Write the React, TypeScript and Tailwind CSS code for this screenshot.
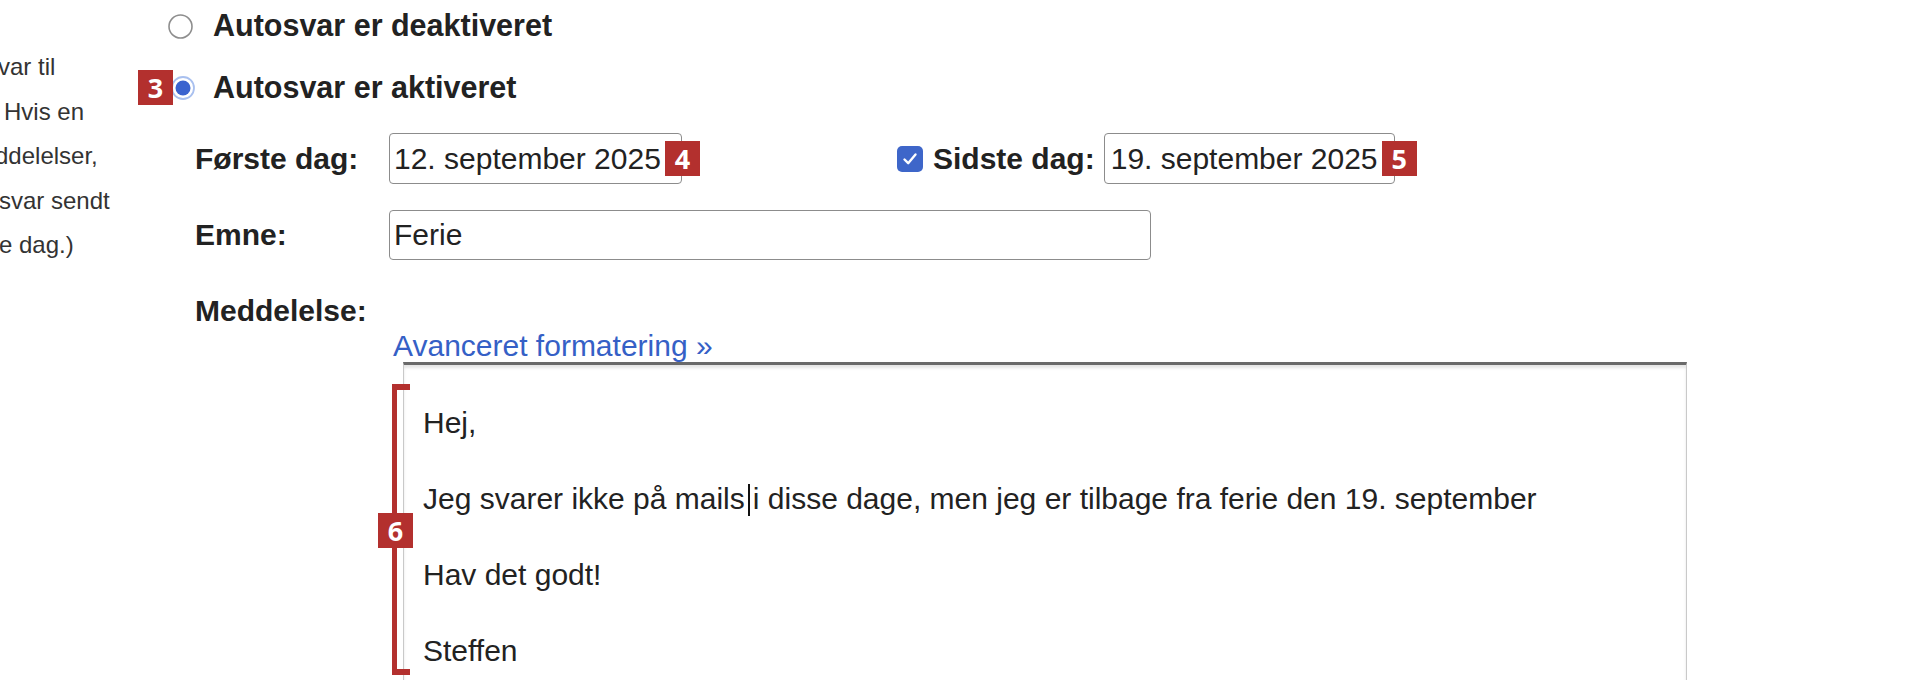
import React from "react";

function Badge({ n, className = "" }: { n: string; className?: string }) {
  return (
    <div
      className={
        "flex h-[35px] w-[35px] items-center justify-center bg-[#b3302e] font-['Open_Sans',sans-serif] text-[27px] font-bold leading-none text-white " +
        className
      }
    >
      {n}
    </div>
  );
}

function RadioOff() {
  return (
    <svg width="25" height="25" viewBox="0 0 25 25" className="shrink-0">
      <circle cx="12.5" cy="12.5" r="11.5" fill="#fff" stroke="#8e8e8e" strokeWidth="1.6" />
    </svg>
  );
}

function RadioOn() {
  return (
    <svg width="24" height="24" viewBox="0 0 24 24" className="shrink-0">
      <circle cx="12" cy="12" r="11" fill="#fff" stroke="#a9c0ef" strokeWidth="1.8" />
      <circle cx="12" cy="12" r="7.5" fill="#3a63cf" />
    </svg>
  );
}

function Checkbox() {
  return (
    <div className="flex h-[26px] w-[26px] shrink-0 items-center justify-center rounded-[5px] bg-[#3e66c9]">
      <svg width="18" height="18" viewBox="0 0 18 18">
        <path d="M3.5 9.5 L7.2 13.2 L14.5 4.5" fill="none" stroke="#fff" strokeWidth="2.4" strokeLinecap="round" strokeLinejoin="round" />
      </svg>
    </div>
  );
}

export default function App() {
  return (
    <div className="h-[680px] w-[1932px] overflow-hidden bg-white font-['Liberation_Sans',Arial,sans-serif] text-[#222]">
      <div className="flex">
        {/* left description column (cut off at the window edge) */}
        <div className="w-[138px] shrink-0 overflow-hidden whitespace-nowrap pt-[45px] text-[24px] leading-[44.5px] text-[#333]">
          <div className="ml-[-2px]">var til</div>
          <div className="pl-[4px]">Hvis en</div>
          <div className="ml-[-5px]">ddelelser,</div>
          <div className="ml-[-1px]">svar sendt</div>
          <div className="ml-[-1px]">e dag.)</div>
        </div>

        {/* main column */}
        <div className="flex flex-col pt-[7px]">
          <div className="flex h-[36px] items-center pl-[30px]">
            <div className="mt-[3px]">
              <RadioOff />
            </div>
            <span className="ml-[20px] whitespace-nowrap text-[30.5px] font-bold leading-[36px] text-[#222]">
              Autosvar er deaktiveret
            </span>
          </div>

          <div className="mt-[27px] flex h-[35px] items-center">
            <Badge n="3" className="relative z-10" />
            <div className="ml-[-2px]">
              <RadioOn />
            </div>
            <span className="ml-[18px] whitespace-nowrap text-[30.5px] font-bold leading-[35px] text-[#222]">
              Autosvar er aktiveret
            </span>
          </div>

          <div className="mt-[28px] flex flex-col pl-[57px]">
            {/* Row: dates */}
            <div className="flex h-[51px] items-center">
              <div className="w-[194px] shrink-0 text-[30px] font-bold leading-[36px]">Første dag:</div>
              <div className="relative flex h-[51px] w-[293px] shrink-0 items-center rounded-[4px] border border-[#8c8c8c] pl-[4px] text-[30px] leading-[36px]">
                12. september 2025
                <Badge n="4" className="absolute right-[-19px] top-[7px]" />
              </div>
              <div className="ml-[215px]">
                <Checkbox />
              </div>
              <div className="ml-[10px] whitespace-nowrap text-[30px] font-bold leading-[36px]">Sidste dag:</div>
              <div className="relative ml-[9px] flex h-[51px] w-[291px] shrink-0 items-center rounded-[4px] border border-[#8c8c8c] pl-[6px] text-[30px] leading-[36px]">
                19. september 2025
                <Badge n="5" className="absolute right-[-23px] top-[7px]" />
              </div>
            </div>

            {/* Row: subject */}
            <div className="mt-[26px] flex h-[50px] items-center">
              <div className="w-[194px] shrink-0 text-[30px] font-bold leading-[36px]">Emne:</div>
              <div className="flex h-[50px] w-[762px] items-center rounded-[4px] border border-[#8c8c8c] pl-[4px] text-[30px] leading-[36px]">
                Ferie
              </div>
            </div>

            {/* Row: message label */}
            <div className="mt-[33px] h-[36px] text-[30px] font-bold leading-[36px]">Meddelelse:</div>
            <div className="h-[33px] pl-[198px] text-[30px] leading-[33px] text-[#3560c6]">
              Avanceret formatering »
            </div>

            {/* textarea */}
            <div className="relative ml-[208px] h-[400px] w-[1284px] border-x border-t-[3px] border-x-[#c9c9c9] border-t-[#6a6a6a] pl-[19px] pt-[39px] text-[30px] leading-[38px] text-[#222] shadow-[inset_0_3px_3px_rgba(0,0,0,0.10)]">
              <div>Hej,</div>
              <div className="h-[38px]" />
              <div className="whitespace-nowrap">
                Jeg svarer ikke på mails
                <span className="mx-[3px] inline-block h-[32px] w-[2px] bg-[#111] align-[-7px]" />
                i disse dage, men jeg er tilbage fra ferie den 19. september
              </div>
              <div className="h-[38px]" />
              <div>Hav det godt!</div>
              <div className="h-[38px]" />
              <div>Steffen</div>

              <div className="absolute left-[-12px] top-[19px] h-[291px] w-[18px] border-y-[6px] border-l-[5px] border-[#b3302e]" />
              <Badge n="6" className="absolute left-[-26px] top-[148px]" />
            </div>
          </div>
        </div>
      </div>
    </div>
  );
}
